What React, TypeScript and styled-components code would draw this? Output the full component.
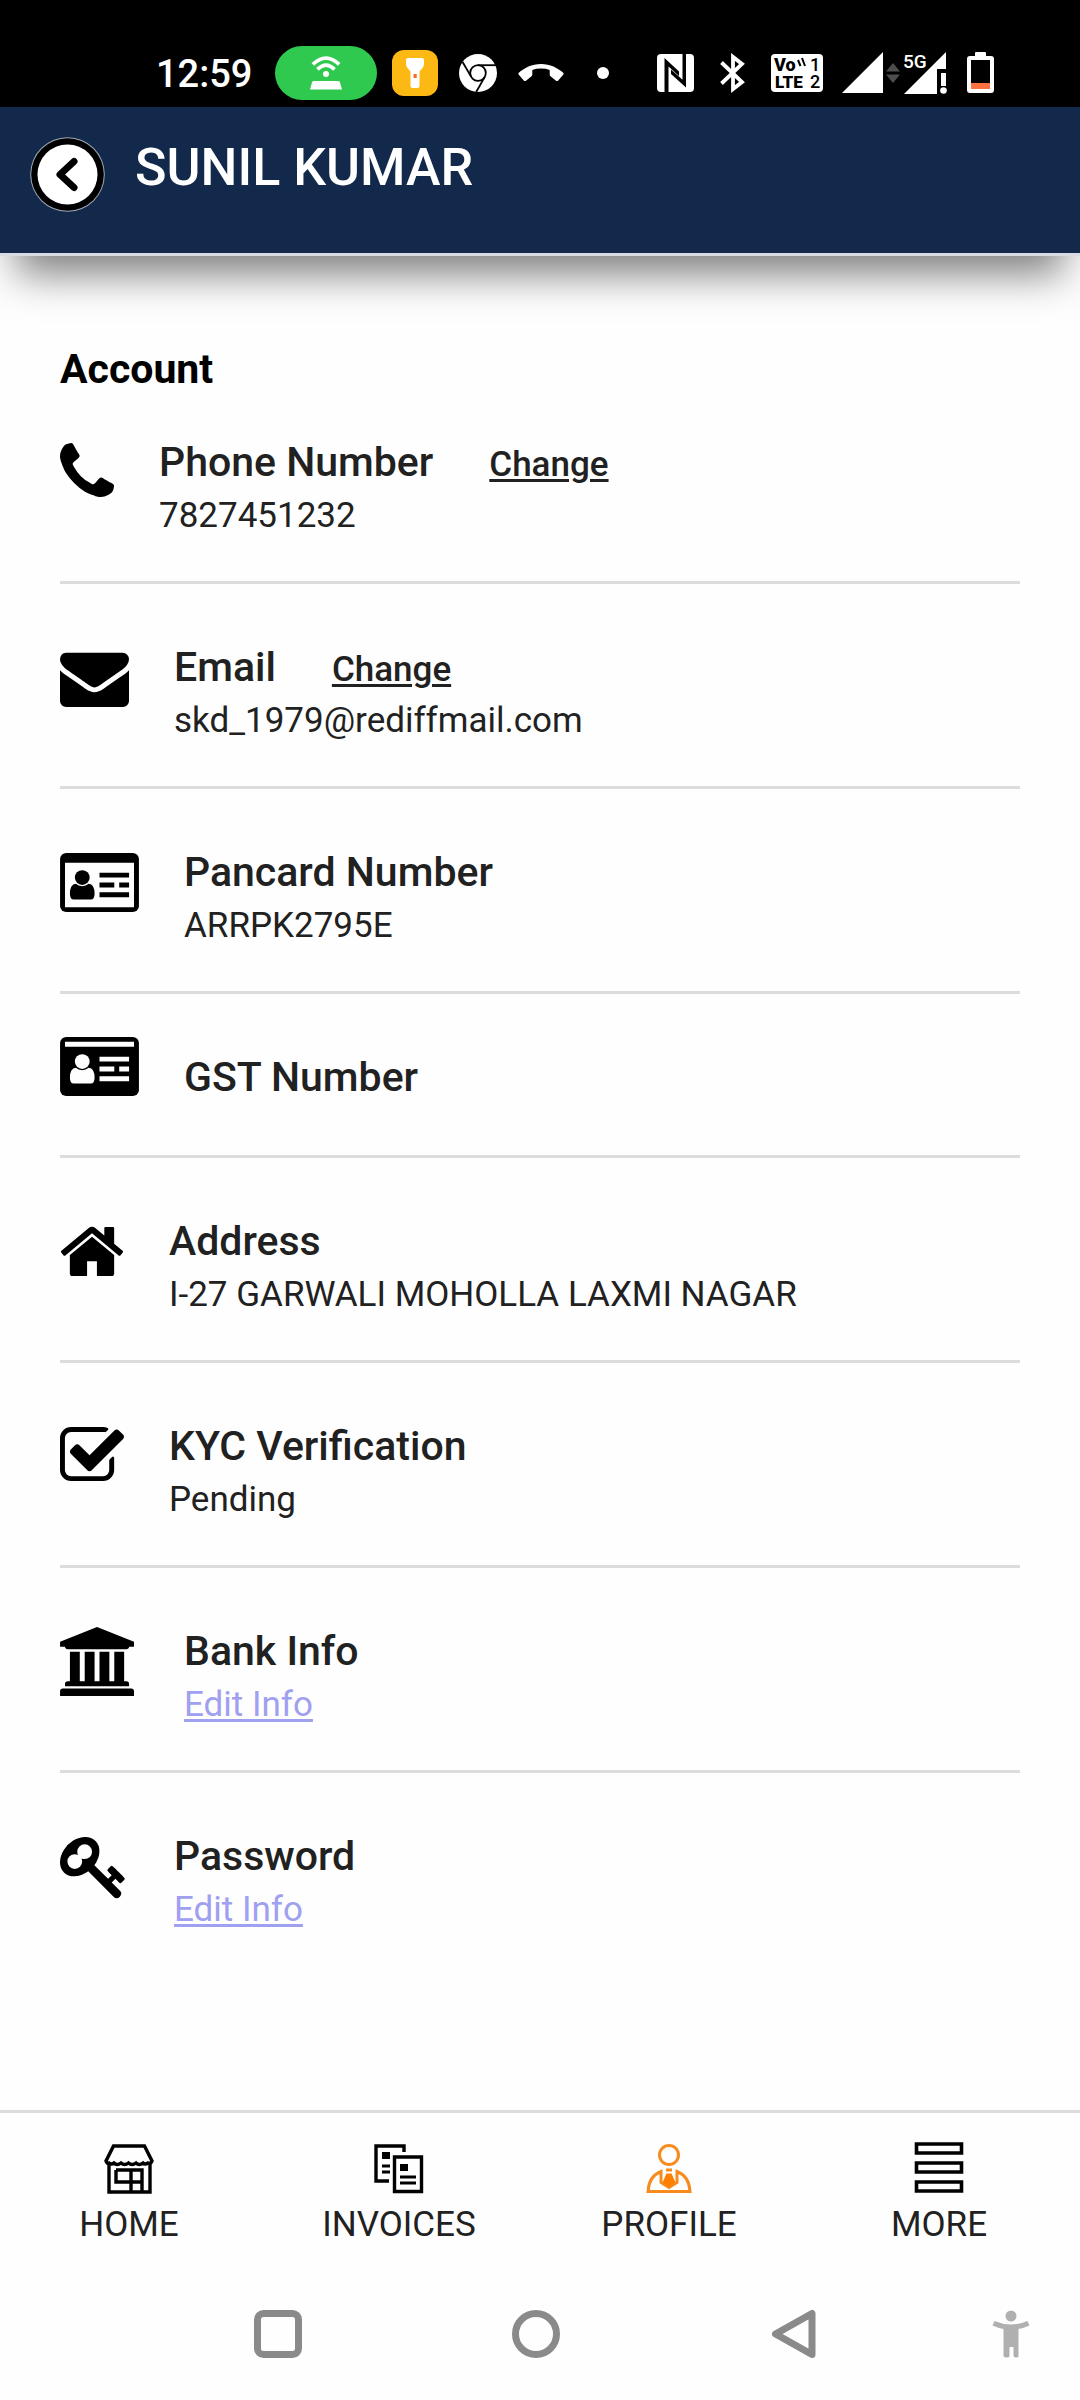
import React from "react";
import styled, { createGlobalStyle } from "styled-components";

const GlobalStyle = createGlobalStyle`
  * { box-sizing: border-box; }
  body { margin: 0; background: #fefefe; color: #212121; font-family: Roboto, "Liberation Sans", sans-serif; }
  h1, h2, h3, p, ul { margin: 0; padding: 0; }
  button { border: 0; padding: 0; background: none; font: inherit; color: inherit; cursor: pointer; }
`;

const Screen = styled.div`
  display: flex;
  flex-direction: column;
  min-height: 100vh;
`;

/* ---------- status bar ---------- */

const StatusBar = styled.div`
  display: flex;
  align-items: center;
  justify-content: space-between;
  height: 107px;
  padding: 38px 86px 0 156px;
  background: #000;
  color: #fff;

  svg { overflow: visible; }
`;

const StatusGroup = styled.div<{ $gap: number }>`
  display: flex;
  align-items: center;
  gap: ${(p) => p.$gap}px;
`;

const Clock = styled.time`
  padding: 2px 2px 0 0;
  font-size: 38px;
  font-weight: 500;
  line-height: 46px;
`;

const HotspotPill = styled.div`
  display: flex;
  align-items: center;
  justify-content: center;
  width: 102px;
  height: 54px;
  border-radius: 27px;
  background: #30c94f;
`;

const TorchBadge = styled.div`
  display: flex;
  align-items: center;
  justify-content: center;
  width: 46px;
  height: 46px;
  border-radius: 12px;
  background: #fdb913;
`;

const Dot = styled.span`
  width: 12px;
  height: 12px;
  margin-left: 12px;
  border-radius: 50%;
  background: #fff;
`;

const Hotspot = () => (
  <svg width="32" height="34" viewBox="0 0 32 34" fill="none" stroke="#fff" strokeWidth="3.6">
    <path d="M2.8 8.4Q16-4.2 29.2 8.4" />
    <path d="M7.4 13.4Q16 5 24.6 13.4" />
    <circle cx="16" cy="18" r="3" fill="#fff" stroke="none" />
    <path d="M4 25h24q1.600 0 2 1.400L32 33.500H0l2-7.100Q2.400 25 4 25z" fill="#fff" stroke="none" />
  </svg>
);

const Torch = () => (
  <svg width="18" height="30" viewBox="0 0 18 30">
    <path d="M0 2q0-2 2-2h14q2 0 2 2v4q0 3-4.500 7.500V28q0 2-2 2h-5q-2 0-2-2V13.500Q0 9 0 6z" fill="#fff" />
    <rect x="7.500" y="16" width="3.200" height="4" fill="#f26a2e" />
  </svg>
);

const Chrome = () => (
  <svg width="38" height="38" viewBox="0 0 38 38">
    <circle cx="19" cy="19" r="19" fill="#fff" />
    <g fill="none" stroke="#000" strokeWidth="1.800">
      <circle cx="19" cy="19" r="7.800" />
      <path d="M19 11.200H37" />
      <path d="M12.200 22.900L3.600 8" />
      <path d="M25.800 22.900L17.200 38" />
    </g>
  </svg>
);

const EndCall = () => (
  <svg width="46" height="20" viewBox="0 0 46 20">
    <path d="M23 1C14 1 6 5 .8 9.800q-1 1 0 2l5 5.700q1 1 2.200.200l5.500-4.500q.8-.6.800-1.600V6.900Q18 5.600 23 5.600t8.700 1.300v4.700q0 1 .8 1.600l5.500 4.500q1.200.8 2.200-.2l5-5.700q1-1 0-2C40 5 32 1 23 1z" fill="#fff" />
  </svg>
);

const Nfc = () => (
  <svg width="37" height="38" viewBox="0 0 37 38">
    <rect width="37" height="38" rx="4" fill="#fff" />
    <path d="M7.500 4L22 17.500V22L11.500 12.500V38h-4z" fill="#000" />
    <path d="M25.500 0h3.500v33.500L14 20v-4.500l11.500 10.300z" fill="#000" />
  </svg>
);

const Bluetooth = () => (
  <svg width="25" height="38" viewBox="0 0 25 38" fill="none" stroke="#fff" strokeWidth="3.800">
    <path d="M1.500 8.500L22 28 13 35V3l9 7L1.500 29.500" />
  </svg>
);

const Volte = () => (
  <svg width="52" height="38" viewBox="0 0 52 38">
    <rect width="52" height="38" rx="4" fill="#fff" />
    <g fontFamily="Roboto, sans-serif" fontSize="18" fontWeight="900" fill="#000">
      <text x="3" y="17">Vo</text>
      <text x="4" y="34" fontSize="17">LTE</text>
      <text x="39" y="17" fontWeight="500">1</text>
      <text x="39" y="34" fontWeight="500">2</text>
    </g>
    <path d="M27 6l2.500 6M31 4l3 8" stroke="#000" strokeWidth="2" fill="none" />
  </svg>
);

const Signal = () => (
  <svg width="41" height="41" viewBox="0 0 41 41">
    <path d="M0 41L41 0v41z" fill="#fff" />
  </svg>
);

const DataArrows = () => (
  <svg width="14" height="20" viewBox="0 0 14 20" fill="#4d4d4d">
    <path d="M0 8.500L7 0l7 8.500zM0 11.500h14L7 20z" />
  </svg>
);

const Signal5G = () => (
  <svg width="45" height="42" viewBox="0 0 45 42">
    <path d="M1 42L43 0V17H34V42z" fill="#fff" />
    <path d="M38 21h5v13h-5z" fill="#fff" />
    <circle cx="40.500" cy="38.500" r="3.300" fill="#fff" />
    <text x="0" y="16" fontFamily="Roboto, sans-serif" fontSize="19" fontWeight="500" fill="#fff">5G</text>
  </svg>
);

const Battery = () => (
  <svg width="27" height="41" viewBox="0 0 27 41">
    <path d="M9 0h9q1 0 1 1v3h5q3 0 3 3v31q0 3-3 3H3q-3 0-3-3V7q0-3 3-3h5V1q0-1 1-1z" fill="#fff" />
    <path d="M4 8h19v23H4z" fill="#000" />
    <path d="M4 31h19v6H4z" fill="#fd7141" />
  </svg>
);

/* ---------- header ---------- */

const Header = styled.header`
  display: flex;
  align-items: flex-start;
  gap: 30px;
  height: 149px;
  padding: 29px 29px 0;
  border-bottom: 3px solid #d8dbe1;
  background: #12294b;
  box-shadow: 0 34px 40px -16px rgba(0, 0, 0, 0.5);
`;

const BackButton = styled.button`
  display: flex;
`;

const UserName = styled.h1`
  color: #fff;
  font-size: 52px;
  font-weight: 500;
  line-height: 64px;
`;

const BackIcon = () => (
  <svg width="76" height="77" viewBox="0 0 76 77">
    <circle cx="38.500" cy="38.500" r="37.300" fill="#a3a9b3" />
    <circle cx="38.500" cy="38.500" r="36.300" fill="#000" />
    <circle cx="38.500" cy="38.500" r="30" fill="#fff" />
    <path d="M45 25.500L31 38.500l14 13" fill="none" stroke="#000" strokeWidth="7" strokeLinecap="round" strokeLinejoin="round" />
  </svg>
);

/* ---------- account list ---------- */

const Content = styled.main`
  flex: 1;
  padding: 90px 60px 0;
`;

const SectionTitle = styled.h2`
  color: #000;
  font-size: 41px;
  font-weight: 700;
  line-height: 46px;
`;

const Rows = styled.ul`
  list-style: none;
`;

const Row = styled.li`
  display: flex;
  align-items: center;
  gap: 45px;
  padding: 38px 0 32px;
  border-bottom: 3px solid #dcdcdc;

  &:first-child { padding-top: 25px; }
  &:last-child { border-bottom: 0; }
`;

const RowIcon = styled.svg`
  flex: none;
  height: 69px;
  margin-bottom: 22px;
  fill: #000;
`;

const RowText = styled.div`
  align-self: flex-start;
  min-width: 0;
  padding: 16px 0 13px;
`;

const RowHead = styled.div`
  display: flex;
  align-items: baseline;
  gap: 56px;
`;

const RowTitle = styled.h3`
  font-size: 41px;
  font-weight: 500;
  line-height: 58px;
`;

const RowValue = styled.p`
  padding-top: 4px;
  font-size: 35px;
  line-height: 41px;
  overflow-wrap: anywhere;
`;

const ActionLink = styled.a<{ $soft?: boolean }>`
  color: ${(p) => (p.$soft ? "#a0a0f0" : "#212121")};
  font-size: 35px;
  font-weight: ${(p) => (p.$soft ? 400 : 500)};
  text-decoration: underline;
  text-decoration-thickness: 3px;
  text-underline-offset: 3px;
`;

const cardLines = "M1024 640h768v128h-768zM1024 896h384v128h-384zM1536 896h256v128h-256zM1024 1152h768v128h-768z";
const cardBody = "M410 928q70 64 166 64t166-64q154 10 154 260 0 152-100 152H356q-100 0-100-152 0-250 154-260z";

const Person = ({ fill }: { fill: string }) => (
  <g fill={fill}>
    <circle cx="576" cy="768" r="192" />
    <path d={cardBody} />
    <path d={cardLines} />
  </g>
);

type IconSpec = { viewBox: string; width: number; art: React.ReactNode };

const icons: Record<string, IconSpec> = {
  phone: {
    viewBox: "192 0 1408 1792",
    width: 54,
    art: (
      <path d="M1600 1240q0 27-10 70.5t-21 68.5q-21 50-122 106-94 51-186 51-27 0-53-3.5t-57.5-12.5-47-14.5-55.5-20.5-49-18q-98-35-175-83-127-79-264-216t-216-264q-48-77-83-175-3-9-18-49t-20.5-55.5-14.5-47-12.5-57.5-3.5-53q0-92 51-186 56-101 106-122 25-11 68.5-21t70.5-10q14 0 21 3 18 6 53 76 11 19 30 54t35 63.5 31 53.5q3 4 17.5 25t21.5 35.5 7 28.5q0 20-28.5 50t-62 55-62 53-28.5 46q0 9 5 22.5t8.5 20.5 14 24 11.5 19q76 137 174 235t235 174q2 1 19 11.5t24 14 20.5 8.5 22.5 5q18 0 46-28.5t53-62 55-62 50-28.5q14 0 28.5 7t35.5 21.5 25 17.5q25 15 53.5 31t63.5 35 54 30q70 35 76 53 3 7 3 21z" />
    ),
  },
  envelope: {
    viewBox: "0 0 1792 1792",
    width: 69,
    art: (
      <path d="M1792 710v794q0 66-47 113t-113 47h-1472q-66 0-113-47t-47-113v-794q44 49 101 87 362 246 497 345 57 42 92.5 65.5t94.5 48 110 24.5h2q51 0 110-24.5t94.5-48 92.5-65.5q170-123 498-345 57-39 100-87zm0-294q0 79-49 151t-122 123q-376 261-468 325-10 7-42.5 31t-54 38.5-52 32.5-57.5 27-50 9h-2q-23 0-50-9t-57.5-27-52-32.5-54-38.5-42.5-31q-91-64-262-182.5t-205-142.5q-62-42-117-115.5t-55-136.5q0-78 41.5-130t118.5-52h1472q65 0 112.5 47t47.5 113z" />
    ),
  },
  cardOutline: {
    viewBox: "0 0 2048 1792",
    width: 79,
    art: (
      <>
        <rect y="128" width="2048" height="1536" rx="160" />
        <path d="M128 384h1792v1152H128z" fill="#fefefe" />
        <Person fill="#000" />
      </>
    ),
  },
  cardSolid: {
    viewBox: "0 0 2048 1792",
    width: 79,
    art: (
      <>
        <rect y="128" width="2048" height="1536" rx="160" />
        <path d="M128 256h1792v128H128z" fill="#fefefe" />
        <Person fill="#fefefe" />
      </>
    ),
  },
  home: {
    viewBox: "64 0 1664 1792",
    width: 64,
    art: (
      <path d="M1472 992v480q0 26-19 45t-45 19h-384v-384h-256v384h-384q-26 0-45-19t-19-45v-480q0-1 .5-3t.5-3l575-474 575 474q1 2 1 6zm223-69l-62 74q-8 9-21 11h-3q-13 0-21-7l-692-577-692 577q-12 8-24 7-13-2-21-11l-62-74q-8-10-7-23.5t11-21.500l719-599q32-26 76-26t76 26l244 204v-195q0-14 9-23t23-9h192q14 0 23 9t9 23v408l219 182q10 8 11 21.500t-7 23.500z" />
    ),
  },
  check: {
    viewBox: "64 0 1664 1792",
    width: 64,
    art: (
      <path d="M1472 930v318q0 119-84.5 203.5t-203.5 84.5h-832q-119 0-203.5-84.5t-84.5-203.5v-832q0-119 84.5-203.5t203.5-84.5h832q63 0 117 25 15 7 18 23 3 17-9 29l-49 49q-10 10-23 10-3 0-9-2-23-6-45-6h-832q-66 0-113 47t-47 113v832q0 66 47 113t113 47h832q66 0 113-47t47-113v-254q0-13 9-22l64-64q10-10 23-10 6 0 12 3 20 8 20 29zm231-489l-814 814q-24 24-57 24t-57-24l-430-430q-24-24-24-57t24-57l110-110q24-24 57-24t57 24l263 263 647-647q24-24 57-24t57 24l110 110q24 24 24 57t-24 57z" />
    ),
  },
  bank: {
    viewBox: "0 0 2048 1792",
    width: 79,
    art: (
      <path d="M960 0l960 384v128h-128q0 26-20.5 45t-48.5 19h-1526q-28 0-48.5-19t-20.5-45h-128v-128zm-704 640h256v768h128v-768h256v768h128v-768h256v768h128v-768h256v768h59q28 0 48.5 19t20.5 45v64h-1664v-64q0-26 20.5-45t48.5-19h59v-768zm1595 960q28 0 48.5 19t20.5 45v128h-1920v-128q0-26 20.5-45t48.5-19h1782z" />
    ),
  },
  key: {
    viewBox: "0 0 1792 1792",
    width: 69,
    art: (
      <path d="M832 512q0-80-56-136t-136-56-136 56-56 136q0 42 19 83-41-19-83-19-80 0-136 56t-56 136 56 136 136 56 136-56 56-136q0-42-19-83 41 19 83 19 80 0 136-56t56-136zm851 704q0 17-49 66t-66 49q-9 0-28.5-16t-36.5-33-38.5-40-24.5-26l-96 96 220 220q28 28 28 68 0 42-39 81t-81 39q-40 0-68-28l-671-671q-176 131-365 131-163 0-265.5-102.5t-102.5-265.5q0-160 95-313t248-248 313-95q163 0 265.5 102.5t102.5 265.5q0 189-131 365l355 355 96-96q-3-3-26-24.5t-40-38.5-33-36.5-16-28.5q0-17 49-66t66-49q13 0 23 10 6 6 46 44.5t82 79.5 86.5 86 73 78 28.5 41z" />
    ),
  },
};

type Entry = { icon: keyof typeof icons; title: string; value?: string; change?: boolean; edit?: boolean };

const entries: Entry[] = [
  { icon: "phone", title: "Phone Number", value: "7827451232", change: true },
  { icon: "envelope", title: "Email", value: "skd_1979@rediffmail.com", change: true },
  { icon: "cardOutline", title: "Pancard Number", value: "ARRPK2795E" },
  { icon: "cardSolid", title: "GST Number" },
  { icon: "home", title: "Address", value: "I-27 GARWALI MOHOLLA LAXMI NAGAR" },
  { icon: "check", title: "KYC Verification", value: "Pending" },
  { icon: "bank", title: "Bank Info", edit: true },
  { icon: "key", title: "Password", edit: true },
];

/* ---------- bottom tabs ---------- */

const Tabs = styled.nav`
  display: grid;
  grid-template-columns: repeat(4, 1fr);
  border-top: 3px solid #dcdcdc;
  padding: 29px 0 23px;
`;

const Tab = styled.a`
  display: flex;
  flex-direction: column;
  align-items: center;
  gap: 10px;
  padding-right: 12px;
  color: #212121;
  font-size: 35px;
  line-height: 41px;
  text-decoration: none;
`;

const StoreIcon = () => (
  <svg width="52" height="52" viewBox="0 0 52 52" fill="none" stroke="#000" strokeWidth="3.400">
    <path d="M10.500 4h31l7.500 15q-1 3-4 2-3 2-5 0-4 3-7 0-4 3-7.500 0-4 3-7.500 0-4 3-7 0-3 2-5 0-2 1-3-2z" />
    <path d="M6 20v30h41V20" />
    <path d="M13 28h26v22M13 28v12h26M28 28v22" />
  </svg>
);

const InvoiceIcon = () => (
  <svg width="52" height="52" viewBox="0 0 52 52" fill="none" stroke="#000" strokeWidth="3.400">
    <path d="M31 10V4H3v35h13" />
    <path d="M21.500 15h27v34.500h-27z" />
    <path d="M9 24h8M9 30h8M27 35h16M27 41h16" strokeWidth="3" />
    <path d="M9 10h8v7H9zM27 22h8v7h-8z" fill="#000" stroke="none" />
  </svg>
);

const ProfileIcon = () => (
  <svg width="52" height="52" viewBox="0 0 52 52" fill="none" stroke="#f68b1e" strokeWidth="3">
    <circle cx="26" cy="13" r="9.500" />
    <path d="M18 29.500Q6 34 5 49.500h42Q46 34 34 29.500v11l-8 5-8-5z" />
    <path d="M23 28h6" />
    <path d="M23.500 31.500h5l4 9-6.500 5-6.500-5z" fill="#ff7f00" stroke="none" />
  </svg>
);

const MoreIcon = () => (
  <svg width="52" height="52" viewBox="0 0 52 52" fill="none" stroke="#000" strokeWidth="3.600">
    <path d="M3.500 2h45v9h-45zM3.500 21h45v9h-45zM3.500 40h45v9h-45z" />
  </svg>
);

/* ---------- system navigation ---------- */

const SystemNav = styled.div`
  display: grid;
  grid-template-columns: 149px repeat(3, 1fr) 157px;
  align-items: center;
  height: 132px;
`;

const SystemButton = styled.button<{ $column: number }>`
  display: flex;
  grid-column: ${(p) => p.$column};
  justify-self: center;
`;

const AssistButton = styled(SystemButton)`
  justify-self: end;
  margin-right: 50px;
`;

export default function App() {
  return (
    <Screen>
      <GlobalStyle />
      <StatusBar>
        <StatusGroup $gap={21}>
          <Clock>12:59</Clock>
          <StatusGroup $gap={15}>
            <HotspotPill><Hotspot /></HotspotPill>
            <TorchBadge><Torch /></TorchBadge>
          </StatusGroup>
          <Chrome />
          <EndCall />
          <Dot />
        </StatusGroup>
        <StatusGroup $gap={26}>
          <Nfc />
          <Bluetooth />
          <StatusGroup $gap={19}>
            <Volte />
            <StatusGroup $gap={3}>
              <Signal />
              <DataArrows />
              <Signal5G />
            </StatusGroup>
            <Battery />
          </StatusGroup>
        </StatusGroup>
      </StatusBar>

      <Header>
        <BackButton aria-label="Back"><BackIcon /></BackButton>
        <UserName>SUNIL KUMAR</UserName>
      </Header>

      <Content>
        <SectionTitle>Account</SectionTitle>
        <Rows>
          {entries.map((e) => {
            const icon = icons[e.icon];
            return (
              <Row key={e.title}>
                <RowIcon viewBox={icon.viewBox} width={icon.width} aria-hidden="true">{icon.art}</RowIcon>
                <RowText>
                  <RowHead>
                    <RowTitle>{e.title}</RowTitle>
                    {e.change && <ActionLink href="#change">Change</ActionLink>}
                  </RowHead>
                  {e.value && <RowValue>{e.value}</RowValue>}
                  {e.edit && <RowValue><ActionLink href="#edit" $soft>Edit Info</ActionLink></RowValue>}
                </RowText>
              </Row>
            );
          })}
        </Rows>
      </Content>

      <Tabs>
        <Tab href="#home"><StoreIcon />HOME</Tab>
        <Tab href="#invoices"><InvoiceIcon />INVOICES</Tab>
        <Tab href="#profile"><ProfileIcon />PROFILE</Tab>
        <Tab href="#more"><MoreIcon />MORE</Tab>
      </Tabs>

      <SystemNav>
        <SystemButton $column={2} aria-label="Recent apps">
          <svg width="48" height="48" viewBox="0 0 48 48"><rect x="3.500" y="3.500" width="41" height="41" rx="6" fill="none" stroke="#8a8a8a" strokeWidth="7" /></svg>
        </SystemButton>
        <SystemButton $column={3} aria-label="Home screen">
          <svg width="48" height="48" viewBox="0 0 48 48"><circle cx="24" cy="24" r="20.500" fill="none" stroke="#8a8a8a" strokeWidth="7" /></svg>
        </SystemButton>
        <SystemButton $column={4} aria-label="Go back">
          <svg width="48" height="50" viewBox="0 0 48 50"><path d="M42 4.500v41L5.500 25z" fill="none" stroke="#8a8a8a" strokeWidth="7" strokeLinejoin="round" /></svg>
        </SystemButton>
        <AssistButton $column={5} aria-label="Accessibility">
          <svg width="38" height="48" viewBox="0 0 38 48" fill="#b0b0b0">
            <circle cx="19" cy="6" r="5.500" />
            <path d="M2.500 11Q19 18 35.500 11l2 4.500Q32 18 26.500 19V46q0 1.500-2.200 1.500T21.500 46v-9h-4v9q0 1.500-2.800 1.500T11.500 46V19Q6 18 .5 15.500z" />
          </svg>
        </AssistButton>
      </SystemNav>
    </Screen>
  );
}
